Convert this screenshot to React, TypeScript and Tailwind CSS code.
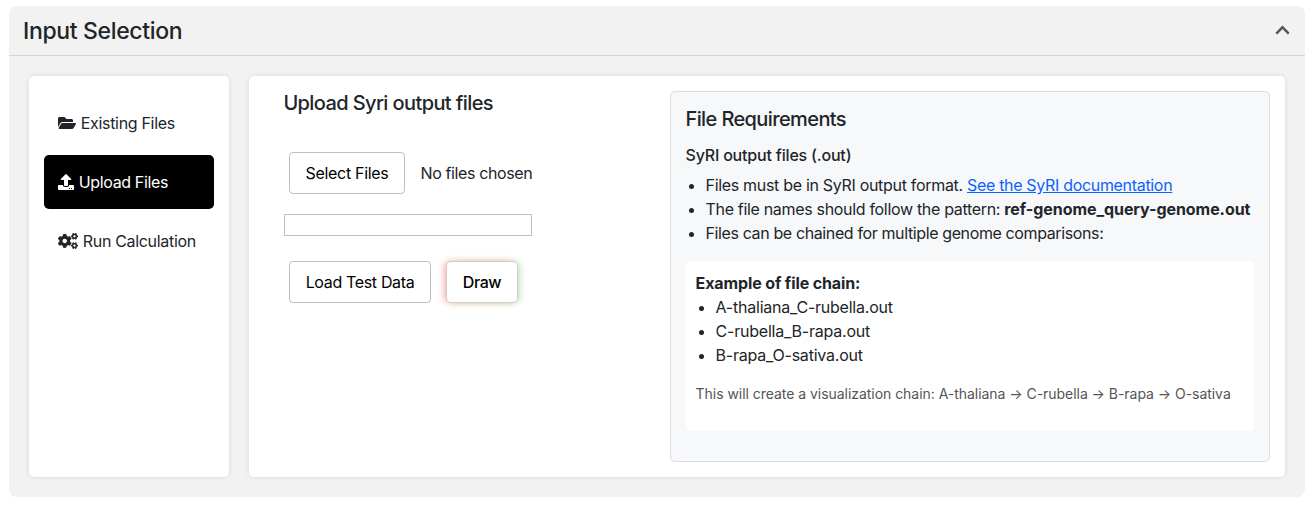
import { FaChevronUp, FaCogs, FaFolderOpen, FaUpload } from "react-icons/fa";

const navItem = "flex h-[54px] w-[170px] items-center whitespace-nowrap rounded-[5px] pl-[14.4px]";
const button =
  "flex h-[42px] items-center justify-center whitespace-nowrap rounded border border-[#bfbfbf] bg-white text-black";

export default function App() {
  return (
    <div className="h-[505px] bg-white pt-[6px] pr-[7px] pl-[9px] font-['Inter',sans-serif] text-base leading-6 text-[#212529]">
      <section className="h-[491px] rounded-[8px] bg-[#f2f2f2]">
        <header className="flex h-[50px] items-center justify-between border-b border-[#d6d6d6] pr-[15px] pl-[14px]">
          <h1 className="text-[23px] font-medium whitespace-nowrap tracking-[-0.35px]">Input Selection</h1>
          <FaChevronUp className="mb-px h-4 w-[15px] text-[#555]" />
        </header>

        <div className="flex gap-5 px-5 pt-5">
          <nav className="flex h-[401px] w-[200px] flex-col gap-[5px] rounded-[5px] bg-white px-[15px] pt-5 shadow-[0_0_5px_rgba(0,0,0,0.1)]">
            <div className={navItem}>
              <FaFolderOpen className="mr-[4.4px] h-4 w-[18px]" />
              <span className="tracking-[-0.32px]">Existing Files</span>
            </div>
            <div className={`${navItem} bg-black text-white`}>
              <FaUpload className="mr-[4.4px] h-4 w-4" />
              <span className="tracking-[-0.36px]">Upload Files</span>
            </div>
            <div className={navItem}>
              <FaCogs className="mr-[4.4px] h-4 w-5" />
              <span className="tracking-[-0.32px]">Run Calculation</span>
            </div>
          </nav>

          <main className="flex h-[401px] w-[1036px] justify-between rounded-[5px] bg-white p-[15px] shadow-[0_0_5px_rgba(0,0,0,0.1)]">
            <div className="pl-5">
              <h2 className="-ml-[0.6px] text-xl leading-6 font-medium whitespace-nowrap tracking-[-0.6px]">
                Upload Syri output files
              </h2>
              <div className="mt-[37px] ml-[5px] flex items-center">
                <button className={`${button} w-[116px]`}>
                  <span className="tracking-[-0.3px]">Select Files</span>
                </button>
                <span className="ml-[15.5px] whitespace-nowrap tracking-[-0.38px]">No files chosen</span>
              </div>
              <div className="mt-5 h-[22px] w-[248px] border border-[#bfbfbf]" />
              <div className="mt-[25px] ml-[5px] flex gap-[15px]">
                <button className={`${button} w-[142px]`}>
                  <span className="tracking-[-0.34px]">Load Test Data</span>
                </button>
                <button className="flex h-[42px] w-[72px] items-center justify-center rounded-[5px] border border-[#d4cec8] bg-white font-medium text-black shadow-[-3px_0_7px_-1px_rgba(255,50,50,0.38),3px_0_7px_-1px_rgba(60,200,60,0.32)]">
                  <span className="tracking-[-0.4px]">Draw</span>
                </button>
              </div>
            </div>

            <aside className="h-[371px] w-[600px] rounded-[5px] border border-[#d9dce0] bg-[#f7f8fa] py-[15px] pl-[15px]">
              <h2 className="-ml-[0.5px] text-xl leading-6 font-medium tracking-[-0.61px]">File Requirements</h2>
              <h3 className="mt-[15px] -ml-[0.5px] leading-[19px] font-medium tracking-[-0.19px]">
                SyRI output files (.out)
              </h3>
              <ul className="mt-2 -ml-[0.5px] list-disc pl-5 whitespace-nowrap">
                <li>
                  <span className="tracking-[-0.31px]">Files must be in SyRI output format. </span>
                  <a href="#docs" className="tracking-[-0.32px] text-[#0d62fd] underline">
                    See the SyRI documentation
                  </a>
                </li>
                <li>
                  <span className="tracking-[-0.32px]">The file names should follow the pattern: </span>
                  <strong className="font-bold tracking-[-0.06px]">ref-genome_query-genome.out</strong>
                </li>
                <li>
                  <span className="tracking-[-0.38px]">Files can be chained for multiple genome comparisons:</span>
                </li>
              </ul>
              <div className="mt-4 h-[170px] w-[568px] rounded bg-white py-[10px] pl-[9.6px] whitespace-nowrap">
                <strong className="block font-bold tracking-[-0.12px]">Example of file chain:</strong>
                <ul className="list-disc pl-5">
                  <li>
                    <span className="tracking-[-0.23px]">A-thaliana_C-rubella.out</span>
                  </li>
                  <li>
                    <span className="tracking-[-0.22px]">C-rubella_B-rapa.out</span>
                  </li>
                  <li>
                    <span className="tracking-[-0.22px]">B-rapa_O-sativa.out</span>
                  </li>
                </ul>
                <p className="mt-4 text-[14px] leading-[22px] text-[#555]">
                  <span className="tracking-[-0.04px]">
                    This will create a visualization chain: A-thaliana → C-rubella → B-rapa → O-sativa
                  </span>
                </p>
              </div>
            </aside>
          </main>
        </div>
      </section>
    </div>
  );
}
